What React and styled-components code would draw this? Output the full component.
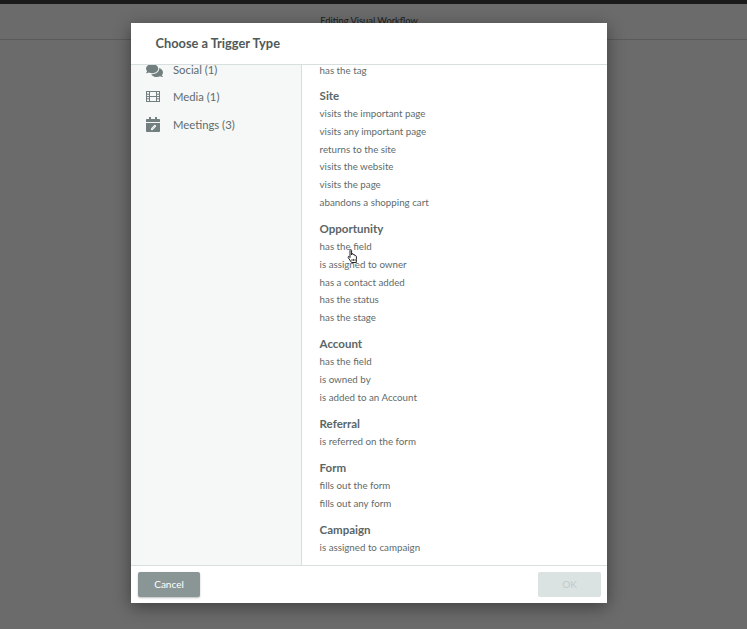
import React from "react"
import styled, { createGlobalStyle } from "styled-components"
import { FaComments } from "react-icons/fa"

const GlobalStyle = createGlobalStyle`
  html, body {
    margin: 0;
    height: 100%;
    background: #6b6b6b;
    font-family: "Lato", "Liberation Sans", sans-serif;
  }
`

const triggerGroups = [
  {
    title: "Site",
    items: [
      "visits the important page",
      "visits any important page",
      "returns to the site",
      "visits the website",
      "visits the page",
      "abandons a shopping cart",
    ],
  },
  {
    title: "Opportunity",
    items: [
      "has the field",
      "is assigned to owner",
      "has a contact added",
      "has the status",
      "has the stage",
    ],
  },
  {
    title: "Account",
    items: ["has the field", "is owned by", "is added to an Account"],
  },
  { title: "Referral", items: ["is referred on the form"] },
  { title: "Form", items: ["fills out the form", "fills out any form"] },
  { title: "Campaign", items: ["is assigned to campaign"] },
]

const FilmIcon = () => (
  <svg width="14" height="11" viewBox="0 0 14 11" fill="none" stroke="currentColor" strokeWidth="1">
    <rect x="0.5" y="0.5" width="13" height="10" />
    <path d="M3.500 .5v10M10.500 .5v10M3.500 5.500h7M.5 3.200h3M.5 5.500h3M.5 7.800h3M10.500 3.200h3M10.500 5.500h3M10.500 7.800h3" />
  </svg>
)

const CalendarIcon = () => (
  <svg width="14" height="15" viewBox="0 0 14 15">
    <path
      fill="currentColor"
      d="M3 0h2v2h4V0h2v2h2.200c.4 0 .8.4.8.8V5H0V2.800C0 2.400.4 2 .8 2H3zM0 6h14v8.200c0 .4-.4.8-.8.8H.8c-.4 0-.8-.4-.8-.8z"
    />
    <path fill="none" stroke="#f5f6f6" strokeWidth="1.1" d="M5.400 11.800l3-3.200c.8-.7 1.600.2 1 .9l-3 3.100c-.6.4-1.200-.1-.8-.7" />
  </svg>
)

const HandCursor = () => (
  <svg width="12" height="15" viewBox="0 0 12 15">
    <path
      fill="#fff"
      stroke="#222"
      strokeWidth="1"
      d="M3 1.400c0-1 1.600-1 1.600 0V6l.2-1c.3-.7 1.400-.5 1.500.2l.1.8c.3-.7 1.400-.5 1.500.3v.7c.4-.6 1.400-.4 1.500.4v3.200L9.300 13.500H4.500L1.200 8.600c-.5-.9.5-1.600 1.200-.9L3 8.500z"
    />
    <path fill="none" stroke="#222" strokeWidth=".8" d="M5 10v2M6.500 10v2M8 10v2" />
  </svg>
)

const App = () => {
  return (
    <Page>
      <GlobalStyle />
      <TopBar />
      <EditorHeader>Editing Visual Workflow</EditorHeader>
      <Modal>
        <ModalHeader>Choose a Trigger Type</ModalHeader>
        <ModalBody>
          <Sidebar>
            <SidebarItem>
              <IconSlot>
                <FaComments size={17} />
              </IconSlot>
              Social (1)
            </SidebarItem>
            <SidebarItem>
              <IconSlot>
                <FilmIcon />
              </IconSlot>
              Media (1)
            </SidebarItem>
            <SidebarItem>
              <IconSlot>
                <CalendarIcon />
              </IconSlot>
              Meetings (3)
            </SidebarItem>
          </Sidebar>
          <TriggerList>
            <ScrolledTrigger>has the tag</ScrolledTrigger>
            {triggerGroups.map((group) => (
              <div key={group.title}>
                <GroupTitle>{group.title}</GroupTitle>
                {group.items.map((item) => (
                  <Trigger key={item}>{item}</Trigger>
                ))}
              </div>
            ))}
            <Cursor>
              <HandCursor />
            </Cursor>
          </TriggerList>
        </ModalBody>
        <ModalFooter>
          <CancelButton>Cancel</CancelButton>
          <OkButton disabled>OK</OkButton>
        </ModalFooter>
      </Modal>
    </Page>
  )
}

const Page = styled.div`
  position: relative;
  width: 747px;
  height: 629px;
  overflow: hidden;
  background: #6b6b6b;
`

const TopBar = styled.div`
  height: 4px;
  background: #1a1a1a;
`

const EditorHeader = styled.div`
  height: 36px;
  box-sizing: border-box;
  padding: 10px 9px 0 0;
  border-bottom: 1px solid #5a5a5a;
  text-align: center;
  font-size: 9.3px;
  line-height: 13px;
  color: #1c1c1c;
`

const Modal = styled.div`
  position: absolute;
  left: 131px;
  top: 23px;
  width: 476px;
  height: 580px;
  display: flex;
  flex-direction: column;
  background: #fff;
  box-shadow: 0 4px 16px rgba(0, 0, 0, 0.42);
`

const ModalHeader = styled.div`
  position: relative;
  z-index: 1;
  height: 42px;
  box-sizing: border-box;
  padding: 12px 0 0 24.5px;
  background: #fff;
  border-bottom: 1px solid #d8dfdf;
  font-size: 12.8px;
  line-height: 17px;
  font-weight: 700;
  color: #4f5a5a;
`

const ModalBody = styled.div`
  flex: 1;
  min-height: 0;
  display: flex;
`

const Sidebar = styled.div`
  width: 171px;
  box-sizing: border-box;
  background: #f6f7f7;
  border-right: 1px solid #d5dede;
`

const SidebarItem = styled.div`
  height: 28px;
  display: flex;
  align-items: center;
  padding-left: 14px;
  font-size: 11.3px;
  color: #5f6b6b;
  &:first-child {
    height: 10px;
    line-height: 10px;
    margin-bottom: 7px;
  }
`

const IconSlot = styled.span`
  width: 28px;
  display: flex;
  align-items: center;
  color: #727f7f;
  svg {
    margin-left: 1px;
  }
`

const TriggerList = styled.div`
  position: relative;
  flex: 1;
  padding-left: 17.6px;
`

const GroupTitle = styled.div`
  height: 18px;
  margin-top: 8.3px;
  font-size: 11.5px;
  line-height: 18px;
  font-weight: 700;
  color: #5a6666;
`

const Trigger = styled.div`
  height: 17.8px;
  font-size: 9.75px;
  line-height: 17.8px;
  color: #5f6b6b;
`

const ScrolledTrigger = styled(Trigger)`
  height: 10px;
  line-height: 10px;
  margin-bottom: 12px;
`

const Cursor = styled.div`
  position: absolute;
  left: 45px;
  top: 184px;
  line-height: 0;
`

const ModalFooter = styled.div`
  height: 38px;
  box-sizing: border-box;
  padding: 6px 6px 0 7px;
  display: flex;
  justify-content: space-between;
  align-items: flex-start;
  border-top: 1px solid #d8dfdf;
`

const CancelButton = styled.button`
  width: 62px;
  height: 25px;
  padding: 0 0 2px;
  border: none;
  border-radius: 2px;
  background: #8a9696;
  box-shadow: 0 1px 2px rgba(0, 0, 0, 0.25);
  color: #fff;
  font-family: inherit;
  font-size: 10px;
  font-weight: 400;
`

const OkButton = styled(CancelButton)`
  width: 63px;
  background: #dbe2e2;
  box-shadow: none;
  color: #bfcaca;
`

export default App
